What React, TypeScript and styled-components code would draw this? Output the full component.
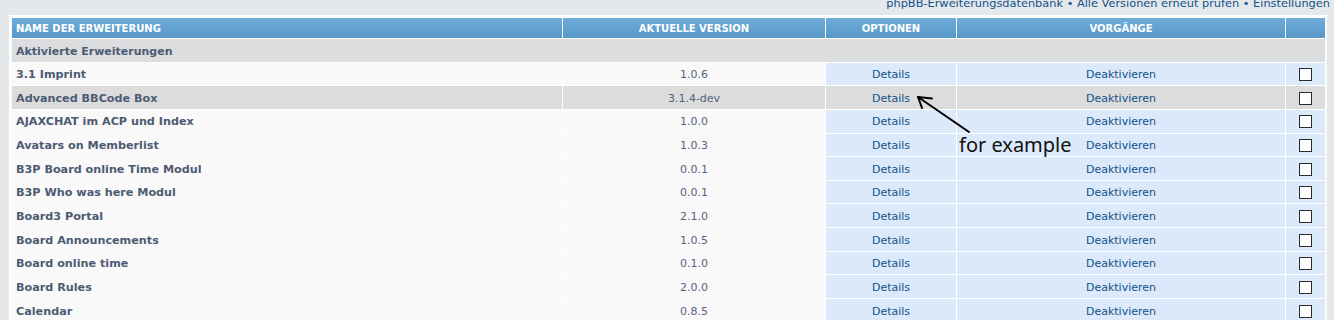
import React from "react";
import styled, { createGlobalStyle } from "styled-components";

const GlobalStyle = createGlobalStyle`
  html, body { margin: 0; padding: 0; }
  body {
    background: #e5e8eb;
    font-family: "DejaVu Sans", Verdana, sans-serif;
    font-size: 11px;
    overflow: hidden;
  }
`;

const COLS = "550px 262px 130px 328px 39px";

const Page = styled.div`
  position: relative;
  width: 1334px;
`;

const TopLinks = styled.div`
  height: 19px;
  margin-top: -4px;
  padding-right: 4px;
  text-align: right;
  color: #105289;
  font-size: 11.35px;
  line-height: 14px;
`;

const Panel = styled.div`
  margin: 0 7px 0 9px;
  padding: 2px 2px 0 2px;
  background: #fbfbfb;
  border-left: 1px solid #fff;
  border-top: 1px solid #fff;
`;

const Table = styled.div`
  display: flex;
  flex-direction: column;
  gap: 1px;
  background: #fff;
`;

const Row = styled.div`
  display: grid;
  grid-template-columns: ${COLS};
  column-gap: 1px;
`;

const HeadCell = styled.div<{ $align?: string }>`
  height: 19px;
  line-height: 19px;
  padding: 1px 4px 0;
  background: linear-gradient(#6eacd8, #5898c9);
  color: #fff;
  font-weight: bold;
  font-size: 10px;
  text-transform: uppercase;
  text-align: ${(p) => p.$align || "center"};
  white-space: nowrap;
`;

const SectionCell = styled.div`
  grid-column: 1 / -1;
  height: 21.15px;
  line-height: 21.15px;
  padding: 1.5px 4px 0;
  background: #dcdddf;
  color: #4c5b73;
  font-weight: bold;
`;

const Cell = styled.div<{ $kind: "name" | "version" | "option"; $hover?: boolean }>`
  height: 21.15px;
  line-height: 21.15px;
  padding: 1.5px 4px 0;
  white-space: nowrap;
  overflow: hidden;
  display: flex;
  align-items: center;
  justify-content: ${(p) => (p.$kind === "name" ? "flex-start" : "center")};
  background: ${(p) =>
    p.$hover ? "#dcdcdc" : p.$kind === "option" ? "#dce9fb" : "#f9f9f9"};
  color: ${(p) => (p.$kind === "name" ? "#4c5b73" : "#536482")};
  font-weight: ${(p) => (p.$kind === "name" ? "bold" : "normal")};
  font-size: ${(p) => (p.$kind === "name" ? "11.2px" : "11px")};
`;

const Link = styled.a`
  color: #105289;
  text-decoration: none;
`;

const Check = styled.input`
  appearance: none;
  -webkit-appearance: none;
  width: 13px;
  height: 13px;
  margin: 0;
  background: #fff;
  border: 1px solid #2a2a2a;
  box-sizing: border-box;
`;

const Annotation = styled.svg`
  position: absolute;
  left: 0;
  top: 0;
  pointer-events: none;
`;

const Note = styled.div`
  position: absolute;
  left: 959px;
  top: 135px;
  font-family: "Noto Sans", "Open Sans", sans-serif;
  font-size: 20px;
  line-height: 28px;
  color: #111;
  white-space: nowrap;
`;

const rows: [string, string][] = [
  ["3.1 Imprint", "1.0.6"],
  ["Advanced BBCode Box", "3.1.4-dev"],
  ["AJAXCHAT im ACP und Index", "1.0.0"],
  ["Avatars on Memberlist", "1.0.3"],
  ["B3P Board online Time Modul", "0.0.1"],
  ["B3P Who was here Modul", "0.0.1"],
  ["Board3 Portal", "2.1.0"],
  ["Board Announcements", "1.0.5"],
  ["Board online time", "0.1.0"],
  ["Board Rules", "2.0.0"],
  ["Calendar", "0.8.5"],
];

export default function App() {
  return (
    <Page>
      <GlobalStyle />
      <TopLinks>
        <Link href="#">phpBB-Erweiterungsdatenbank</Link> &bull;{" "}
        <Link href="#">Alle Versionen erneut prüfen</Link> &bull;{" "}
        <Link href="#">Einstellungen</Link>
      </TopLinks>
      <Panel>
        <Table>
          <Row>
            <HeadCell $align="left">Name der Erweiterung</HeadCell>
            <HeadCell>Aktuelle Version</HeadCell>
            <HeadCell>Optionen</HeadCell>
            <HeadCell>Vorgänge</HeadCell>
            <HeadCell />
          </Row>
          <Row>
            <SectionCell>Aktivierte Erweiterungen</SectionCell>
          </Row>
          {rows.map(([name, version], i) => {
            const hover = i === 1;
            return (
              <Row key={name}>
                <Cell $kind="name" $hover={hover}>{name}</Cell>
                <Cell $kind="version" $hover={hover}>{version}</Cell>
                <Cell $kind="option" $hover={hover}>
                  <Link href="#">Details</Link>
                </Cell>
                <Cell $kind="option" $hover={hover}>
                  <Link href="#">Deaktivieren</Link>
                </Cell>
                <Cell $kind="option" $hover={hover}>
                  <Check type="checkbox" />
                </Cell>
              </Row>
            );
          })}
        </Table>
      </Panel>
      <Annotation width="1334" height="320" viewBox="0 0 1334 320">
        <g stroke="#000" strokeWidth="2" strokeLinecap="round" fill="none">
          <line x1="969" y1="136" x2="918" y2="101" />
          <line x1="918" y1="101" x2="932" y2="102.5" />
          <line x1="918" y1="101" x2="922" y2="112" />
        </g>
      </Annotation>
      <Note>for example</Note>
    </Page>
  );
}
